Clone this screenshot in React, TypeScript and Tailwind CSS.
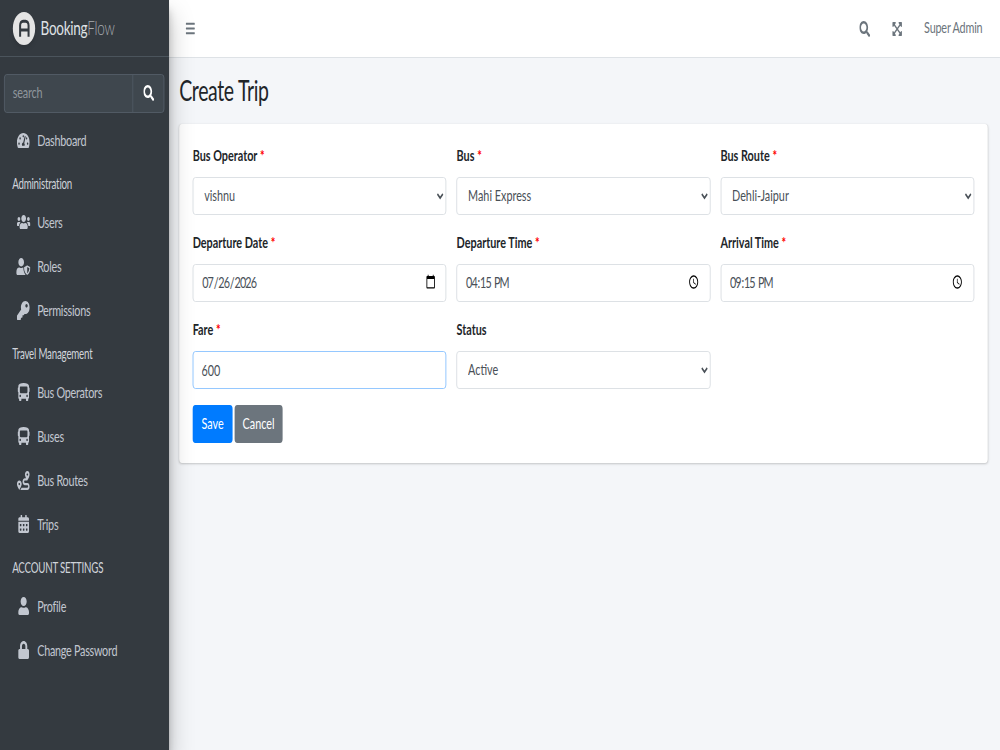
import type { ReactNode } from "react";
import { FaTachometerAlt, FaUsers, FaUserShield, FaKey, FaBus, FaRoute, FaCalendarAlt, FaUser, FaLock, FaSearch, FaExpandArrowsAlt, FaBars } from "react-icons/fa";

function NavItem({ icon, label }: { icon: ReactNode; label: string }) {
  return (
    <div className="flex h-[44px] items-center text-[16px] tracking-[-0.4px] text-[#c2c7d0]">
      <span className="flex w-[55px] shrink-0 justify-center pl-[16px] pr-[2px]">{icon}</span>
      <span>{label}</span>
    </div>
  );
}

function NavHeader({ label }: { label: string }) {
  return <div className="h-[38px] pl-[18px] pt-[13px] text-[14.4px] leading-[18px] tracking-[-0.3px] text-[#d0d4db]">{label}</div>;
}

function Label({ text, required = false }: { text: string; required?: boolean }) {
  return (
    <label className="mb-[11px] block h-[20px] text-[16px] leading-[18px] font-bold text-[#212529]">
      {text}
      {required && <span className="ml-[4px] text-[#ff0000]">*</span>}
    </label>
  );
}

const fieldCls = "h-[38px] w-full rounded-[4px] border bg-white text-[16px] text-[#495057] outline-none";

function SelectField({ label, value, required }: { label: string; value: string; required?: boolean }) {
  return (
    <div>
      <Label text={label} required={required} />
      <select className={`${fieldCls} border-[#d6dbe0] pb-[4px] pl-[12px] pr-[4px]`} defaultValue={value}>
        <option>{value}</option>
      </select>
    </div>
  );
}

function InputField({ label, type, value, focus }: { label: string; type: string; value: string; focus?: boolean }) {
  return (
    <div>
      <Label text={label} required />
      <input
        type={type}
        defaultValue={value}
        className={`${fieldCls} px-[12px] pb-[2px] ${focus ? "border-[#80bdff]" : "border-[#d6dbe0] tracking-[-1.3px]"}`}
      />
    </div>
  );
}

export default function App() {
  return (
    <div className="h-[750px] w-[1000px] overflow-hidden">
      {/* reference is the 1479px wide page squeezed to 1000px */}
      <div className="flex h-full w-[1479px] origin-top-left scale-x-[0.6761] bg-[#f4f6f9] font-['Lato',sans-serif]">
        <aside className="z-10 flex h-full w-[250px] shrink-0 flex-col bg-[#343a40] shadow-[0_14px_28px_rgba(0,0,0,0.25),0_10px_10px_rgba(0,0,0,0.22)]">
          <div className="flex h-[57px] shrink-0 items-center border-b border-[#4b545c] pl-[19px]">
            <div className="flex h-[33px] w-[33px] items-center justify-center rounded-full bg-[#e4e4e4] shadow-md">
              <svg viewBox="0 0 16 16" className="h-[20px] w-[20px]" fill="none" stroke="#343a40" strokeWidth="2.4">
                <path d="M3 15V6a3.5 3.5 0 0 1 3.5-3.5h3A3.5 3.5 0 0 1 13 6v9M3 9.5h10" />
              </svg>
            </div>
            <span className="ml-[8px] pb-[2px] text-[20px] font-normal tracking-[-0.4px] text-[#dfe1e4]">
              Booking<span className="font-light text-[#a9adb2]">Flow</span>
            </span>
          </div>
          <div className="ml-[6px] mr-[7px] mt-[17px] flex h-[39px] shrink-0 rounded-[4px] border border-[#56606a] bg-[#3f474e]">
            <div className="flex flex-1 items-center pb-[3px] pl-[12px] text-[16px] tracking-[-0.3px] text-[#8f969c]">search</div>
            <div className="flex w-[46px] items-center justify-center border-l border-[#56606a] pb-[2px] text-white">
              <FaSearch size={16} />
            </div>
          </div>
          <nav className="mt-[5px] flex flex-col">
            <NavItem icon={<FaTachometerAlt size={19} />} label="Dashboard" />
            <NavHeader label="Administration" />
            <NavItem icon={<FaUsers size={20} />} label="Users" />
            <NavItem icon={<FaUserShield size={21} />} label="Roles" />
            <NavItem icon={<FaKey size={19} />} label="Permissions" />
            <NavHeader label="Travel Management" />
            <NavItem icon={<FaBus size={18} />} label="Bus Operators" />
            <NavItem icon={<FaBus size={18} />} label="Buses" />
            <NavItem icon={<FaRoute size={19} />} label="Bus Routes" />
            <NavItem icon={<FaCalendarAlt size={18} />} label="Trips" />
            <NavHeader label="ACCOUNT SETTINGS" />
            <NavItem icon={<FaUser size={18} />} label="Profile" />
            <NavItem icon={<FaLock size={18} />} label="Change Password" />
          </nav>
        </aside>

        <main className="flex min-w-0 flex-1 flex-col">
          <header className="flex h-[58px] shrink-0 items-center border-b border-[#dee2e6] bg-white pl-[24px] pr-[26px] text-[#6c757d]">
            <FaBars size={15} />
            <div className="ml-auto flex items-center">
              <FaSearch size={16} />
              <FaExpandArrowsAlt size={16} className="ml-[32px]" />
              <span className="ml-[32px] pb-[3px] text-[16px] tracking-[-0.3px]">Super Admin</span>
            </div>
          </header>
          <h1 className="ml-[15px] mt-[15px] h-[34px] text-[28.8px] leading-[34px] font-normal tracking-[-0.5px] text-[#212529]">Create Trip</h1>
          <section className="ml-[15px] mr-[18px] mt-[17px] rounded-[4px] bg-white px-[20px] pb-[20px] pt-[22px] shadow-[0_0_1px_rgba(0,0,0,0.125),0_1px_3px_rgba(0,0,0,0.2)]">
            <div className="grid grid-cols-3 gap-x-[15px] gap-y-[18px]">
              <SelectField label="Bus Operator" value="vishnu" required />
              <SelectField label="Bus" value="Mahi Express" required />
              <SelectField label="Bus Route" value="Dehli-Jaipur" required />
              <InputField label="Departure Date" type="date" value="2026-07-26" />
              <InputField label="Departure Time" type="time" value="16:15" />
              <InputField label="Arrival Time" type="time" value="21:15" />
              <InputField label="Fare" type="text" value="600" focus />
              <SelectField label="Status" value="Active" />
            </div>
            <div className="mt-[16px] flex gap-[3px] text-[16px] text-white">
              <button className="h-[38px] rounded-[4px] bg-[#007bff] px-[13px] pb-[2px]">Save</button>
              <button className="h-[38px] rounded-[4px] bg-[#6c757d] px-[12px] pb-[2px]">Cancel</button>
            </div>
          </section>
        </main>
      </div>
    </div>
  );
}
